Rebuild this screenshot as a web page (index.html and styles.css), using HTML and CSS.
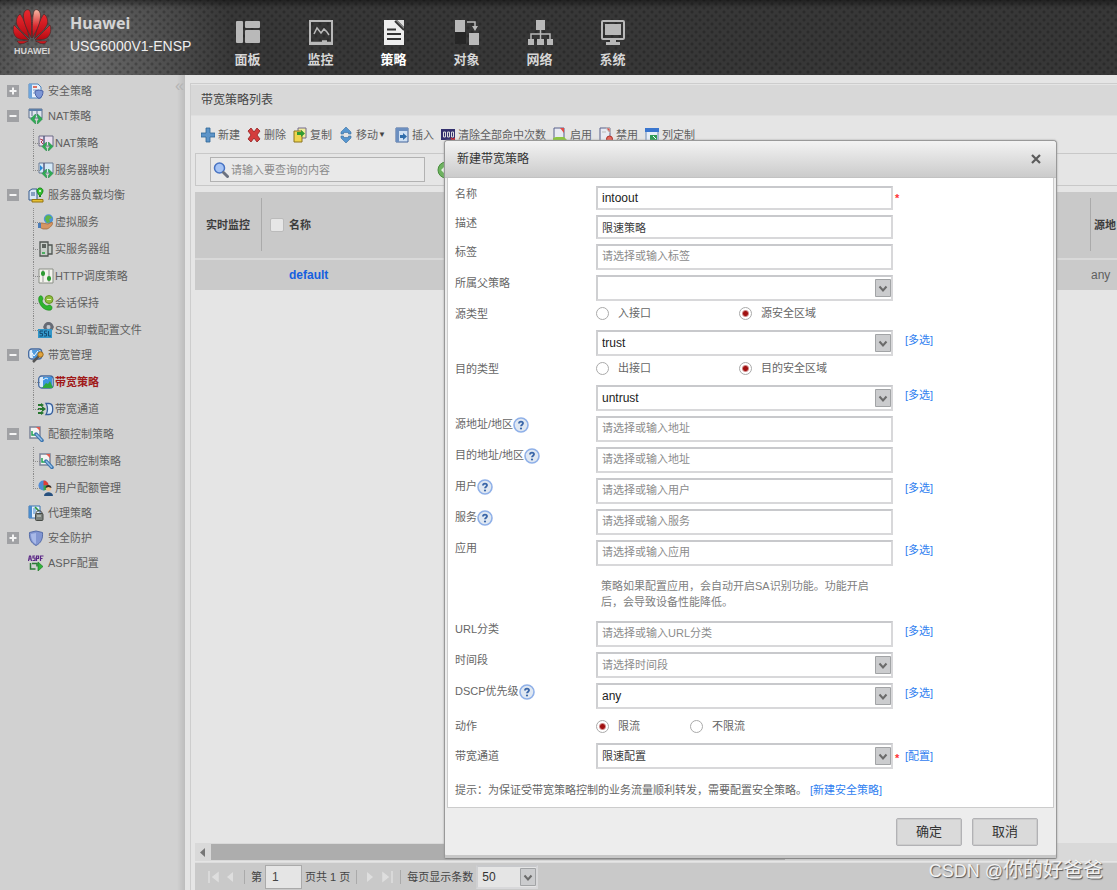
FILE: index.html
```html
<!DOCTYPE html>
<html lang="zh-CN">
<head>
<meta charset="utf-8">
<title>Huawei USG6000V1-ENSP</title>
<link rel="stylesheet" href="styles.css">
</head>
<body>
<svg class="defs" aria-hidden="true">
  <linearGradient id="red" x1="0" y1="0" x2="0" y2="1"><stop offset="0" stop-color="#e8292f"/><stop offset="1" stop-color="#b3070f"/></linearGradient>
  <linearGradient id="shine" x1="0" y1="0" x2="0" y2="1"><stop offset="0" stop-color="#f7b9a4"/><stop offset=".6" stop-color="#d9252c"/><stop offset="1" stop-color="#b3070f"/></linearGradient>
  <symbol id="nat" viewBox="0 0 16 16"><path d="M1 1h13v9H1z" fill="#dfe6ee" stroke="#5c6f8c"/><path d="M1 1h13v2H1z" fill="#5c7fa8"/><path d="M4 3v5M9 3v5" stroke="#5c6f8c"/><path d="M7.500 6L2.500 11l5 5v-3L6 11l1.500-2zM9.500 6l5 5-5 5v-3l1.500-2-1.500-2z" fill="#2fae55" stroke="#16803a" stroke-width=".5"/></symbol>
  <symbol id="natred" viewBox="0 0 16 16"><path d="M1 1h14v10H1z" fill="#eadff0" stroke="#6b6b84"/><path d="M6 1v10" stroke="#555b80" stroke-width="1.500"/><path d="M2 4l3 1-2 2 2 2" stroke="#b33c4a" fill="none"/><path d="M8.500 7L4 11.500 8.500 16v-2.500l-1.500-2 1.500-1.500zM10.500 7l4.500 4.500-4.500 4.500v-2.500l1.500-2-1.500-1.500z" fill="#2fae55" stroke="#16803a" stroke-width=".5"/></symbol>
  <symbol id="natblue" viewBox="0 0 16 16"><path d="M1 1h14v10H1z" fill="#d5e9f7" stroke="#6b7b94"/><path d="M6 1v10" stroke="#555b80" stroke-width="1.500"/><path d="M2 3l3 3-3 3z" fill="#2488d8"/><path d="M8.500 7L4 11.500 8.500 16v-2.500l-1.500-2 1.500-1.500zM10.500 7l4.500 4.500-4.500 4.500v-2.500l1.500-2-1.500-1.500z" fill="#2fae55" stroke="#16803a" stroke-width=".5"/></symbol>
  <symbol id="quota" viewBox="0 0 16 16"><path d="M2 1h10v11H2z" fill="#f4f4f4" stroke="#7c8498" stroke-width="1.500"/><path d="M8 1h4v4z" fill="#e25b50"/><path d="M4 5v4h4" stroke="#23a455" stroke-width="1.500" fill="none"/><path d="M8 8l6 6.500" stroke="#3b74ae" stroke-width="3.500" stroke-linecap="round"/><path d="M8 8l6 6.500" stroke="#8fbce6" stroke-width="1.500"/></symbol>
  <symbol id="help" viewBox="0 0 16 16"><circle cx="8" cy="8" r="7" fill="#e0e8f2" stroke="#8fb0e8" stroke-width="1.600"/><path d="M6 6.500C6 4 10 4 10 6.300c0 1.300-2 1.400-2 3" stroke="#3a66a8" stroke-width="1.900" fill="none"/><circle cx="8" cy="11.500" r="1.100" fill="#3a66a8"/></symbol>
  <symbol id="chev" viewBox="0 0 16 18"><path d="M.5.5h15v17H.5z" fill="#cbccce" stroke="#a2a4a6"/><path d="M4.500 7.500L8 11.500l3.500-4" stroke="#6b6b6b" stroke-width="2" fill="none"/></symbol>
  <symbol id="plus" viewBox="0 0 12 12"><path d="M0 0h12v12H0z" fill="#a0a1a4"/><path d="M6 2.500v7M2.500 6h7" stroke="#f4f4f4" stroke-width="2"/></symbol>
  <symbol id="minus" viewBox="0 0 12 12"><path d="M0 0h12v12H0z" fill="#a0a1a4"/><path d="M2.500 6h7" stroke="#f4f4f4" stroke-width="2"/></symbol>
</svg>

<header class="top">
  <div class="logo">
    <svg width="40" height="36" viewBox="0 0 38 36" stroke="#4a2a2a" stroke-width=".7">
      <g id="petals"><path d="M21.500 30.500C23 24 27 10 31 6c4 3 4.500 8 2.500 12-2.500 5-8.500 9-12 12.500z" fill="url(#red)"/><path d="M22 32C27 27 34 20 37 17c2 6 0 12-5 14-3 1-7 .6-10 1z" fill="url(#red)"/><path d="M22.500 33H34c-1.500 3-5 3.500-7.500 2z" fill="url(#red)"/></g>
      <use href="#petals" transform="matrix(-1 0 0 1 38 0)"/>
      <path d="M18.500 30C18.900 22 18.800 3 16 2c-3-1.500-6 2-5.500 7 .5 8 5.500 16 8 21z" fill="url(#red)"/>
      <path d="M19.500 30C19.100 22 19.200 3 22 2c3-1.500 6 2 5.500 7-.5 8-5.500 16-8 21z" fill="url(#shine)"/>
    </svg>
    <span>HUAWEI</span>
  </div>
  <div class="brand"><strong>Huawei</strong><span>USG6000V1-ENSP</span></div>
  <nav class="mainnav">
    <a href="#"><svg width="26" height="26" viewBox="0 0 26 26" fill="#b9b9b9"><rect x="1" y="2" width="7" height="22" rx="1"/><rect x="10" y="2" width="15" height="7" rx="1"/><rect x="10" y="11" width="15" height="13" rx="1"/></svg>面板</a>
    <a href="#"><svg width="26" height="26" viewBox="0 0 26 26" fill="none" stroke="#b9b9b9" stroke-width="2"><rect x="2" y="2" width="22" height="23"/><path d="M6 15l3-6 4 5 3-4 3 3 2 3" stroke-width="1.500"/><path d="M14 22.500h5M2 24h22" stroke-width="2.500"/></svg>监控</a>
    <a href="#" class="on"><svg width="26" height="26" viewBox="0 0 26 26"><path d="M3 1h12l8 8v17H3z" fill="#eee"/><path d="M16 1h7v7z" fill="#ddd"/><path d="M14 2l9 9" stroke="#333" stroke-width="2"/><path d="M6 10.500h9M6 15h14M6 20h14" stroke="#333" stroke-width="2"/></svg>策略</a>
    <a href="#"><svg width="26" height="26" viewBox="0 0 26 26" fill="#b9b9b9"><path d="M1 13h11v12H1z" fill="#262626"/><path d="M1 1h10v12H1zM15 14h10v12H15z"/><path d="M13 3h8v4" fill="none" stroke="#b9b9b9" stroke-width="1.500"/><path d="M18 7h6l-3 5z"/></svg>对象</a>
    <a href="#"><svg width="26" height="26" viewBox="0 0 26 26" fill="#b9b9b9"><path d="M9 1h9v10H9zM1 20h6v6H1zM10 20h7v6h-7zM20 20h6v6h-6z"/><path d="M13.500 11v9M4 20v-5h19v5" fill="none" stroke="#b9b9b9" stroke-width="1.500"/></svg>网络</a>
    <a href="#"><svg width="26" height="26" viewBox="0 0 26 26" fill="#b9b9b9"><rect x="2" y="2" width="22" height="18" rx="1" fill="none" stroke="#b9b9b9" stroke-width="2"/><path d="M5 5h16v11H5zM10 20h6v3h4v3H6v-3h4z"/></svg>系统</a>
  </nav>
</header>

<div class="shell">
<aside class="side">
  <span class="fold">«</span>
  <ul class="tree">
    <li><div class="node"><svg class="tg"><use href="#plus"/></svg><svg class="ic" viewBox="0 0 16 16"><path d="M1 1h9l3 3v11H1z" fill="#eaf2fb" stroke="#4a82bd"/><path d="M1 1h3v14H1z" fill="#6ea5dc"/><path d="M5 4h4" stroke="#d8432e" stroke-width="1.500"/><path d="M5 7h6M5 10h4" stroke="#7d9cc2"/><path d="M7 8l4-1 4 1c0 4-1 6-4 7.500C8 14 7 12 7 8z" fill="#7d97d6" stroke="#4a62a8"/></svg><a href="#">安全策略</a></div></li>
    <li><div class="node"><svg class="tg"><use href="#minus"/></svg><svg class="ic"><use href="#nat"/></svg><a href="#">NAT策略</a></div>
      <ul>
        <li><svg class="ic"><use href="#natred"/></svg><a href="#">NAT策略</a></li>
        <li><svg class="ic"><use href="#natblue"/></svg><a href="#">服务器映射</a></li>
      </ul></li>
    <li><div class="node"><svg class="tg"><use href="#minus"/></svg><svg class="ic" viewBox="0 0 16 16"><path d="M1 4l3-2h5v11H1z" fill="#dce8f5" stroke="#33588c"/><path d="M3 6h4M3 8h4" stroke="#33588c"/><path d="M12 10V7" stroke="#1c7a1f" stroke-width="2"/><path d="M9 4c0-4 6-4 6 0 0 2-3 5-3 5s-3-3-3-5z" fill="#35bf2f" stroke="#168a18"/><circle cx="12" cy="4" r="1" fill="#fff"/><path d="M4 12.500h11v2.500H4z" fill="#e7c136" stroke="#957511"/></svg><a href="#">服务器负载均衡</a></div>
      <ul>
        <li><svg class="ic" viewBox="0 0 16 16"><circle cx="10.500" cy="5" r="4.700" fill="#4c94d6"/><path d="M8 2c3-2 5 0 6 2l-3 1 1 3-3 1-2-4z" fill="#5fb548"/><path d="M1 9h3l6 1 4-2c2 2-2 6-5 7H5l-4-2z" fill="#d59663" stroke="#9b6334" stroke-width=".7"/><path d="M0 9h3v5H0z" fill="#4b7cb7"/></svg><a href="#">虚拟服务</a></li>
        <li><svg class="ic" viewBox="0 0 16 16"><path d="M2 1h8v14H2zM10 4h4v9h-4z" fill="#c9cfca" stroke="#4f5652" stroke-width="1.300"/><path d="M4 4h4M4 6h4" stroke="#39403b" stroke-width="1.300"/><path d="M4 12h3" stroke="#21a33e" stroke-width="1.500"/></svg><a href="#">实服务器组</a></li>
        <li><svg class="ic" viewBox="0 0 16 16"><path d="M1 1h14v14H1z" fill="#f4f4ee" stroke="#8a8f86"/><path d="M5 2v12M11 2v12" stroke="#999"/><rect x="3" y="3" width="4" height="5" rx="2" fill="#2d9b32"/><rect x="9" y="8" width="4" height="5" rx="2" fill="#2d9b32"/></svg><a href="#">HTTP调度策略</a></li>
        <li><svg class="ic" viewBox="0 0 16 16"><path d="M1 2c2-3 4 0 4 2L4 6c1 3 3 4 5 5l2-1c3 0 4 3 2 5C6 17-1 8 1 2z" fill="#2fb52f" stroke="#17851a" stroke-width=".6"/><circle cx="11" cy="4.500" r="4" fill="#8fbd3f" stroke="#678e25"/><path d="M9 4.500h4" stroke="#e5f3c2"/></svg><a href="#">会话保持</a></li>
        <li><svg class="ic" viewBox="0 0 16 16"><circle cx="10.500" cy="5" r="3.500" fill="none" stroke="#666b74" stroke-width="3"/><path d="M10.500 0v10M5.500 5h10" stroke="#666b74" stroke-width="2"/><circle cx="10.500" cy="5" r="2" fill="#c5c9d0"/><path d="M0 7h14v9H0z" fill="#3297c9"/><path d="M5 9H2v2.500h2.500V14H1.500M9 9H6.500v2.500h2V14H6M10.500 9v5h2.500" stroke="#154d75" fill="none"/></svg><a href="#">SSL卸载配置文件</a></li>
      </ul></li>
    <li><div class="node"><svg class="tg"><use href="#minus"/></svg><svg class="ic" viewBox="0 0 16 16"><rect x=".7" y="2" width="13" height="10" rx="3" fill="#dcebfa" stroke="#44699e" stroke-width="1.300"/><path d="M4 3h7l2 3-3 5H5z" fill="#4e9ade"/><path d="M4 6l2 3 4-5" stroke="#fff" fill="none"/><path d="M5 15l6-6" stroke="#555" stroke-width="2.500"/><circle cx="12.500" cy="7.500" r="2.700" fill="#e1a43e" stroke="#9a691b"/></svg><a href="#">带宽管理</a></div>
      <ul>
        <li><svg class="ic" viewBox="0 0 16 16"><rect x=".7" y="2" width="14.500" height="12" rx="3" fill="#dcebfa" stroke="#44699e" stroke-width="1.300"/><path d="M5 3h9v10H5z" fill="#3e94df"/><path d="M5 6l3-2 2 1" stroke="#e8f4ff" fill="none"/><path d="M4 14l4-5 2 1 2-3 3 7z" fill="#2fa93e"/></svg><a href="#" class="cur">带宽策略</a></li>
        <li><svg class="ic" viewBox="0 0 16 16"><path d="M0 4h4M0 8h4M0 12h4" stroke="#25762d" stroke-width="2"/><path d="M3 2l3 2-3 2zM4 5l4 3-4 3zM3 10l3 2-3 2z" fill="#25762d"/><path d="M8 2.500h3c5 0 5 11 0 11H8c2-3 2-8 0-11z" fill="#d8e8f9" stroke="#375f9d" stroke-width="1.300"/></svg><a href="#">带宽通道</a></li>
      </ul></li>
    <li><div class="node"><svg class="tg"><use href="#minus"/></svg><svg class="ic"><use href="#quota"/></svg><a href="#">配额控制策略</a></div>
      <ul>
        <li><svg class="ic"><use href="#quota"/></svg><a href="#">配额控制策略</a></li>
        <li><svg class="ic" viewBox="0 0 16 16"><circle cx="5.500" cy="5.500" r="5" fill="#4f8bd6"/><path d="M5.500 5.500V.5a5 5 0 015 5z" fill="#e03f34"/><path d="M5.500 5.500h5a5 5 0 01-5 5z" fill="#35a84b"/><circle cx="10.500" cy="8.500" r="2.500" fill="#f1c18d"/><path d="M7.500 8c0-4 6-4 6 0l-3-1z" fill="#332a26"/><path d="M6 16c0-5 9-5 9 0z" fill="#28517f"/></svg><a href="#">用户配额管理</a></li>
      </ul></li>
    <li><div class="node"><span class="tg"></span><svg class="ic" viewBox="0 0 16 16"><path d="M1 1h11v12H1z" fill="#e3eefa" stroke="#3973b0"/><path d="M1 1h3v12H1z" fill="#4b8ccc"/><path d="M5 4h4M5 6h3M5 8h2" stroke="#4b8ccc"/><path d="M7 2l4 4" stroke="#2e9a3b" stroke-width="1.500"/><path d="M8 10V8c0-3 6-3 6 0v2" stroke="#444" fill="none"/><rect x="7.500" y="8.500" width="7.500" height="7" rx="1" fill="#7c827c" stroke="#464b46"/><path d="M9 11h4" stroke="#d8e0d8"/></svg><a href="#">代理策略</a></div></li>
    <li><div class="node"><svg class="tg"><use href="#plus"/></svg><svg class="ic" viewBox="0 0 16 16"><path d="M1.500 2.500L8 1l6.500 1.500C15 9 13 13 8 15.500 3 13 1 9 1.500 2.500z" fill="#8296d2" stroke="#566da9"/><path d="M3 4l5-1v11C4 12 3 8 3 4z" fill="#a8b9e8"/></svg><a href="#">安全防护</a></div></li>
    <li><div class="node"><span class="tg"></span><svg class="ic" viewBox="0 0 16 16"><path d="M.5 6l1-5h1l1 5M1 4h2M7 1H5v2h2v2.500H4.500M8.500 6V1h2v2.500h-2M12.500 6V1h3M12.500 3.500h2" stroke="#5b2786" stroke-width="1.200" fill="none"/><path d="M2.500 8v6h5M4 8.500h5v3" stroke="#2d7a37" stroke-width="1.500" fill="none"/><path d="M10 7l5 4.500-5 4.500z" fill="#2fb43b" stroke="#17701f" stroke-width=".6"/></svg><a href="#">ASPF配置</a></div></li>
  </ul>
</aside>

<main class="main">
  <section class="panel">
    <h1>带宽策略列表</h1>
    <div class="tools">
      <button><svg viewBox="0 0 14 16"><path d="M5 1h4v5h5v4H9v5H5v-5H0V6h5z" fill="#5d94c8" stroke="#2f6496" stroke-width=".8"/></svg>新建</button>
      <button><svg viewBox="0 0 14 16"><path d="M1 4l3-3 3 4 3-4 3 3-3 4 3 4-3 3-3-4-3 4-3-3 3-4z" fill="#d43d3d" stroke="#942020" stroke-width=".8"/></svg>删除</button>
      <button><svg viewBox="0 0 14 16"><path d="M5 1h8v10H5z" fill="#f0ec9d" stroke="#746b8c"/><path d="M1 4h8v11H1z" fill="#efd54f" stroke="#8b7420"/><path d="M4 5h4V3l4 3.500L8 10V8H4z" fill="#319b32"/></svg>复制</button>
      <button class="move"><svg viewBox="0 0 14 16"><path d="M7 0l5 5v2H9.500V5.500h-5V7H2V5zM7 16l5-5V9H9.500v1.500h-5V9H2v2z" fill="#5696d0" stroke="#3b6f9f" stroke-width=".6"/></svg>移动<i>▼</i></button>
      <button><svg viewBox="0 0 14 16"><path d="M1 1h12v14H1z" fill="#cfe0f3" stroke="#42659a"/><path d="M1 1h12v3H1zM1 1h3v14H1z" fill="#6c8fc0"/><path d="M5 8h3V6l4 3.500L8 13v-2H5z" fill="#2f6cab"/></svg>插入</button>
      <button><svg viewBox="0 0 14 16"><path d="M0 2h14v11H0z" fill="#33306e"/><path d="M2.500 5h2v5h-2zM6.500 5h2v5h-2zM10.500 5h2v5h-2z" stroke="#ddd" fill="none"/><path d="M10 11l4 4M14 11l-4 4" stroke="#d22" stroke-width="1.500"/></svg>清除全部命中次数</button>
      <button><svg viewBox="0 0 14 16"><path d="M1 1h10v12H1z" fill="#e8eaf2" stroke="#59618a"/><path d="M7 1h4v5z" fill="#e24c47"/><path d="M0 11l3-1h8l3 3v2H0z" fill="#8cc63e"/></svg>启用</button>
      <button><svg viewBox="0 0 14 16"><path d="M1 1h10v13H1z" fill="#e8eaf2" stroke="#59618a"/><path d="M7 1h4v5zM3 5h4" fill="#e24c47" stroke="#bbb"/><circle cx="10.500" cy="12" r="3" fill="#e6665c" stroke="#ad3029"/></svg>禁用</button>
      <button><svg viewBox="0 0 14 16"><path d="M1 2h12v12H1z" fill="#e6eef8" stroke="#6d8ab5"/><path d="M0 1h14v4H0z" fill="#3a76cf"/><path d="M5 14V8h7v6z" fill="#2f9c57"/><path d="M8 9l3 3" stroke="#fff"/></svg>列定制</button>
    </div>
    <div class="searchbar">
      <label class="search"><svg width="16" height="16" viewBox="0 0 16 16"><circle cx="6.500" cy="6" r="5" fill="#a6c4f5" stroke="#4873c3" stroke-width="1.500"/><path d="M10.500 10.500l4 4" stroke="#6c7280" stroke-width="3" stroke-linecap="round"/></svg><input aria-label="查询" placeholder="请输入要查询的内容"></label>
      <button class="go" aria-label="查询"><svg width="18" height="18" viewBox="0 0 18 18"><circle cx="9" cy="9" r="8" fill="#6db35f" stroke="#478c3c"/><path d="M4 9l5-5v3h5v4H9v3z" fill="#eef7ec"/></svg></button>
    </div>
    <table>
      <thead><tr><th class="c1">实时监控</th><th class="c2"><label><input type="checkbox">名称</label></th><th class="c3">域</th><th class="c4">源地</th></tr></thead>
      <tbody><tr><td></td><td class="name"><a href="#">default</a></td><td></td><td class="any">any</td></tr></tbody>
    </table>
    <div class="space"></div>
    <div class="hbar"><svg width="16" height="16" viewBox="0 0 16 16"><path d="M10 4v9L5 8.500z" fill="#777"/></svg><span></span></div>
    <div class="pager">
      <button aria-label="首页"><svg width="14" height="14" viewBox="0 0 14 14"><path d="M2 1v12M11 3v8L6 7z" fill="#dedede" stroke="#dedede" stroke-width="1.500"/></svg></button>
      <button aria-label="上一页"><svg width="14" height="14" viewBox="0 0 14 14"><path d="M9 2v10L3 7z" fill="#dedede"/></svg></button>
      <i class="bar"></i><label for="pg">第</label><input id="pg" value="1"><span>页共 1 页</span><i class="bar"></i>
      <button aria-label="下一页"><svg width="14" height="14" viewBox="0 0 14 14"><path d="M4 2v10l6-5z" fill="#dedede"/></svg></button>
      <button aria-label="末页"><svg width="14" height="14" viewBox="0 0 14 14"><path d="M12 1v12M3 3v8l5-4z" fill="#dedede" stroke="#dedede" stroke-width="1.500"/></svg></button>
      <i class="bar"></i><label for="ps">每页显示条数</label>
      <div class="sel small"><select id="ps"><option>50</option></select><svg><use href="#chev"/></svg></div>
    </div>
  </section>
</main>
</div>

<form class="dialog" role="dialog" aria-labelledby="dt">
  <div class="dhead"><h2 id="dt">新建带宽策略</h2><button type="button" aria-label="关闭"><svg width="10" height="10" viewBox="0 0 10 10"><path d="M1 1l8 8M9 1L1 9" stroke="#5b5b5b" stroke-width="2.200"/></svg></button></div>
  <div class="dbody">
    <div class="row"><label for="f1">名称</label><input class="short lat" id="f1" value="intoout"><b>*</b></div>
    <div class="row"><label for="f2">描述</label><input class="short" id="f2" value="限速策略"></div>
    <div class="row"><label for="f3">标签</label><input id="f3" placeholder="请选择或输入标签"></div>
    <div class="row"><label for="f4">所属父策略</label><div class="sel"><select id="f4"><option></option></select><svg><use href="#chev"/></svg></div></div>
    <div class="row rad"><span>源类型</span><div class="radios"><label><input type="radio" name="s">入接口</label><label><input type="radio" name="s" checked>源安全区域</label></div></div>
    <div class="row"><span></span><div class="sel lat"><select aria-label="源安全区域"><option>trust</option></select><svg><use href="#chev"/></svg></div><a href="#">[多选]</a></div>
    <div class="row rad"><span>目的类型</span><div class="radios"><label><input type="radio" name="d">出接口</label><label><input type="radio" name="d" checked>目的安全区域</label></div></div>
    <div class="row"><span></span><div class="sel lat"><select aria-label="目的安全区域"><option>untrust</option></select><svg><use href="#chev"/></svg></div><a href="#">[多选]</a></div>
    <div class="row"><label for="f5">源地址/地区<svg class="q"><use href="#help"/></svg></label><input id="f5" placeholder="请选择或输入地址"></div>
    <div class="row"><label for="f6">目的地址/地区<svg class="q"><use href="#help"/></svg></label><input id="f6" placeholder="请选择或输入地址"></div>
    <div class="row"><label for="f7">用户<svg class="q"><use href="#help"/></svg></label><input id="f7" placeholder="请选择或输入用户"><a href="#">[多选]</a></div>
    <div class="row"><label for="f8">服务<svg class="q"><use href="#help"/></svg></label><input id="f8" placeholder="请选择或输入服务"></div>
    <div class="row"><label for="f9">应用</label><input id="f9" placeholder="请选择或输入应用"><a href="#">[多选]</a></div>
    <div class="row"><span></span><p class="hint">策略如果配置应用，会自动开启SA识别功能。功能开启后，会导致设备性能降低。</p></div>
    <div class="row"><label for="f10">URL分类</label><input id="f10" placeholder="请选择或输入URL分类"><a href="#">[多选]</a></div>
    <div class="row"><label for="f11">时间段</label><div class="sel ph"><select id="f11"><option>请选择时间段</option></select><svg><use href="#chev"/></svg></div></div>
    <div class="row"><label for="f12">DSCP优先级<svg class="q"><use href="#help"/></svg></label><div class="sel lat"><select id="f12"><option>any</option></select><svg><use href="#chev"/></svg></div><a href="#">[多选]</a></div>
    <div class="row mid"><span>动作</span><div class="radios near"><label><input type="radio" name="a" checked>限流</label><label><input type="radio" name="a">不限流</label></div></div>
    <div class="row mid"><label for="f13">带宽通道</label><div class="sel"><select id="f13"><option>限速配置</option></select><svg><use href="#chev"/></svg></div><b>*</b><a href="#">[配置]</a></div>
    <p class="tip">提示：为保证受带宽策略控制的业务流量顺利转发，需要配置安全策略。 <a href="#">[新建安全策略]</a></p>
  </div>
  <div class="dfoot"><button type="button">确定</button><button type="button">取消</button></div>
</form>
<div class="mark">CSDN @<span>你的好爸爸</span></div>
</body>
</html>
```
FILE: styles.css
```css
* { box-sizing: border-box; }
body {
  margin: 0;
  min-height: 100vh;
  display: flex;
  flex-direction: column;
  position: relative;
  overflow: hidden;
  background: #e5e5e5;
  color: #5f5f5f;
  font: 11px/16px "Liberation Sans", "Noto Sans CJK SC", sans-serif;
}
h1, h2, p, ul { margin: 0; padding: 0; }
ul { list-style: none; }
a { color: inherit; text-decoration: none; }
button, input, select { font: inherit; color: inherit; margin: 0; padding: 0; border: 0; background: none; }
svg { display: block; flex: none; }
.defs { position: absolute; width: 0; height: 0; }

.top {
  height: 75px;
  display: flex;
  padding: 8px 0 0 12px;
  background:
    radial-gradient(circle, rgba(0,0,0,.22) 1px, transparent 2px) 0 0 / 8px 8px,
    radial-gradient(circle, rgba(0,0,0,.22) 1px, transparent 2px) 4px 4px / 8px 8px,
    linear-gradient(rgba(0,0,0,.4), transparent 8px),
    radial-gradient(circle at 75px 60px, #6e6e6e, #373737 160px);
}
.logo { width: 40px; text-align: center; color: #d5d5d5; font: bold 9px/14px "Liberation Sans", sans-serif; }
.brand { width: 159px; padding: 4px 0 0 18px; color: #eee; font-size: 14px; line-height: 22px; display: flex; flex-direction: column; white-space: nowrap; }
.brand strong { font: bold 16px/23px "Noto Sans", sans-serif; color: #d4d4d4; }
.mainnav { display: flex; }
.mainnav a { width: 73px; display: flex; flex-direction: column; align-items: center; gap: 6px; padding-top: 11px; color: #d6d6d6; font-size: 13px; line-height: 18px; font-weight: bold; }
.mainnav .on { color: #fff; }

.shell { flex: 1; display: flex; min-height: 0; }
.side { width: 185px; flex: none; position: relative; padding-top: 3px; background: linear-gradient(90deg, #d1d1d1 177px, #bdbdbd); }
.fold { position: absolute; right: 1px; top: 3px; color: #b4b4b4; font-size: 16px; }
.node { display: flex; align-items: center; height: 25px; padding-left: 7px; }
.tg { width: 12px; height: 12px; margin-right: 9px; flex: none; }
.ic { width: 16px; height: 16px; }
.node .ic { margin-right: 4px; }
.tree ul { padding-top: 1px; margin: 0 0 -1px 33px; }
.tree ul li { display: flex; align-items: center; height: 27px; position: relative; padding-left: 5px; gap: 1px; }
.tree ul li::before { content: ""; position: absolute; left: 0; top: 0; width: 6px; height: 14px; border-left: 1px dotted #8b8b8b; border-bottom: 1px dotted #8b8b8b; }
.tree ul li:not(:last-child)::after { content: ""; position: absolute; left: 0; top: 13px; height: 14px; border-left: 1px dotted #8b8b8b; }
.cur { color: #a01919; font-weight: bold; }

.main { flex: 1; min-width: 0; display: flex; padding: 8px 0 0 5px; }
.panel { flex: 1; min-width: 0; display: flex; flex-direction: column; border: solid #cdcdcd; border-width: 1px 0 0 1px; padding-left: 4px; overflow: hidden; }
h1 { margin: 1px 0 0 -4px; height: 31px; padding-left: 10px; background: #d8d8d8; border-bottom: 1px solid #dfdfdf; color: #444; font-size: 12px; line-height: 30px; font-weight: normal; }
.tools { display: flex; gap: 7px; padding: 10px 0 0 6px; height: 37px; align-items: flex-start; }
.tools button { display: flex; align-items: center; gap: 3px; height: 18px; white-space: nowrap; }
.tools svg { width: 14px; height: 16px; }
.tools i { font-size: 8px; font-style: normal; color: #444; margin-left: -3px; }
.tools .move { margin-right: 2px; }
.searchbar { height: 33px; border: 1px solid #c8c8c8; border-right: 0; display: flex; align-items: center; padding-left: 14px; gap: 12px; }
.search { width: 215px; height: 25px; display: flex; align-items: center; gap: 2px; padding-left: 2px; border: 1px solid #b2b2b2; background: #e9e9e9; }
.search input { flex: 1; min-width: 0; }
::placeholder { color: #8c8c8c; opacity: 1; }
table { margin-top: 6px; width: 100%; border-collapse: collapse; table-layout: fixed; }
th { height: 67px; background: #c9c9c9; text-align: left; color: #3d3d3d; padding: 0; white-space: nowrap; }
.c1 { width: 66px; text-align: center; }
.c3 { width: 45px; }
.c4 { width: 27px; }
.c4, .c2 { background: linear-gradient(#aaa, #aaa) 0 6px / 1px 53px no-repeat #c9c9c9; padding-left: 4px; }
.c2 { padding-left: 9px; }
.c2 label { display: flex; align-items: center; gap: 5px; }
.c2 input { appearance: none; width: 14px; height: 14px; background: #e6e6e6; border: 1px solid #bbb; border-radius: 2px; }
td { height: 31px; padding: 0; background: #cacaca; border-top: 2px solid #d9d9d9; font-size: 12px; }
.name { padding-left: 28px; color: #1560df; font-weight: bold; }
.any { padding-left: 1px; }
.space { flex: 1; }
.hbar { height: 18px; display: flex; align-items: center; background: #d9d9d9; }
.hbar span { flex: 0 0 574px; height: 16px; background: #adadad; }
.pager { margin-top: 1px; height: 28px; background: #c9c9c9; border-top: 1px solid #ddd; display: flex; align-items: center; gap: 3px; padding-left: 12px; color: #444; white-space: nowrap; }
.bar { width: 1px; height: 14px; background: #aaa; margin: 0 3px; }
.pager > input { width: 37px; height: 24px; padding-left: 6px; background: #e5e5e5; border: 1px solid #aaa; font-size: 12px; }

.dialog { position: absolute; left: 444px; top: 140px; width: 613px; border: 1px solid #999; border-bottom-color: #888; border-radius: 4px 4px 2px 2px; background: #ededed; box-shadow: 0 0 2px #999, inset 0 -3px #c7c7c7; }
.dhead { height: 37px; display: flex; align-items: center; justify-content: space-between; padding: 0 15px 0 12px; border-radius: 3px 3px 0 0; background: linear-gradient(#f3f3f3, #cbcbcb); border-bottom: 1px solid #c2c2c2; }
h2 { font-size: 12px; line-height: 18px; color: #333; font-weight: normal; }
.dbody { margin: 0 2px; background: #fff; border: solid #ccc; border-width: 0 1px 1px; padding: 8px 0 0 7px; display: flex; flex-direction: column; gap: 5px; color: #666; }
.row { display: grid; grid-template-columns: 141px 297px 12px auto; align-items: start; line-height: 17px; }
.row > label:first-child { display: flex; align-items: center; }
.q { width: 16px; height: 16px; }
.row > input, .sel select { width: 100%; height: 26px; border: 2px solid #d8d8da; border-top-color: #c8c9cc; border-left-color: #cfd0d2; background: #fff; padding: 0 0 2px 4px; }
.row > input, .row .sel { color: #3c3c3c; }
.row > .short { height: 24px; padding-bottom: 0; }
.row .lat { font-size: 12px; color: #222; }
.row .ph { color: #8c8c8c; }
.sel { position: relative; }
.sel select { appearance: none; display: block; padding-bottom: 0; }
.sel svg { position: absolute; right: 2px; top: 4px; width: 16px; height: 18px; pointer-events: none; }
.small { width: 62px; }
.small select { height: 24px; background: #e5e5e5; color: #333; font-size: 12px; }
.small svg { top: 3px; }
.row b { grid-column: 3; padding: 4px 0 0 2px; color: #f33; font-size: 11px; line-height: 16px; }
.row > a { grid-column: 4; line-height: 20px; color: #2f80f0; }
.radios { display: grid; grid-template-columns: 143px auto; }
.near { grid-template-columns: 94px auto; }
.radios label { display: flex; align-items: center; gap: 9px; height: 19px; padding-bottom: 4px; }
.radios input { appearance: none; width: 13px; height: 13px; border: 1px solid #aaa; border-radius: 50%; background: #fff; }
.radios input:checked { background: radial-gradient(circle, #a01010 2px, #fff 4px); }
.mid { align-items: center; }
.mid .radios label { height: 24px; padding: 0; }
.hint { width: 285px; padding: 7px 0 6px 5px; line-height: 16px; color: #808080; }
.tip { height: 33px; line-height: 33px; white-space: nowrap; }
.tip a { color: #2f80f0; }
.dfoot { height: 50px; display: flex; justify-content: flex-end; align-items: center; gap: 10px; padding: 0 18px 2px 0; }
.dfoot button { width: 66px; height: 28px; background: #dadada; border: 1px solid #b2b2b5; border-radius: 2px; color: #333; font-size: 13px; box-shadow: inset 0 0 0 1px #ccc; }
.mark { position: absolute; right: 14px; bottom: 6px; color: #f2f2f2; font-size: 18px; line-height: 26px; text-shadow: 1px 1px 1px #555; white-space: nowrap; }
.mark span { font-size: 20px; }
```
